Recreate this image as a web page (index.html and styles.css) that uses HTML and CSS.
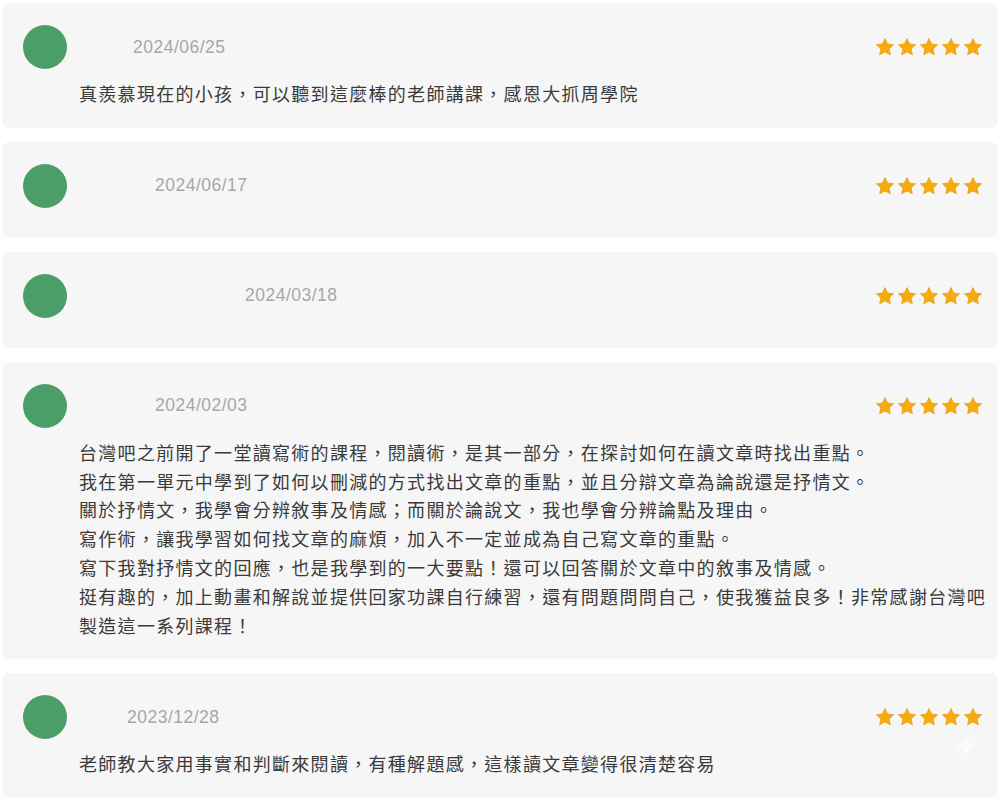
FILE: index.html
```html
<!DOCTYPE html>
<html lang="zh-Hant">
<head>
    <meta charset="UTF-8">
    <meta name="viewport" content="width=device-width, initial-scale=1.0">
    <title>課程評價</title>
    <link rel="stylesheet" href="styles.css">
</head>
<body>
    <svg width="0" height="0" class="defs">
        <symbol id="star" viewBox="0 0 24 24">
            <path d="M12 1.8l3.1 6.6 7.2.9-5.3 5 1.4 7.1L12 17.9l-6.4 3.5 1.4-7.1-5.3-5 7.2-.9z"/>
        </symbol>
    </svg>
    <div class="reviews">
        <div class="review">
            <div class="review-head">
                <span class="avatar"></span>
                <span class="name name-1"></span>
                <span class="date">2024/06/25</span>
                <span class="stars">
                    <svg><use href="#star"/></svg><svg><use href="#star"/></svg><svg><use href="#star"/></svg><svg><use href="#star"/></svg><svg><use href="#star"/></svg>
                </span>
            </div>
            <p class="review-text">真羨慕現在的小孩，可以聽到這麼棒的老師講課，感恩大抓周學院</p>
        </div>
        <div class="review">
            <div class="review-head">
                <span class="avatar"></span>
                <span class="name name-2"></span>
                <span class="date">2024/06/17</span>
                <span class="stars">
                    <svg><use href="#star"/></svg><svg><use href="#star"/></svg><svg><use href="#star"/></svg><svg><use href="#star"/></svg><svg><use href="#star"/></svg>
                </span>
            </div>
        </div>
        <div class="review">
            <div class="review-head">
                <span class="avatar"></span>
                <span class="name name-3"></span>
                <span class="date">2024/03/18</span>
                <span class="stars">
                    <svg><use href="#star"/></svg><svg><use href="#star"/></svg><svg><use href="#star"/></svg><svg><use href="#star"/></svg><svg><use href="#star"/></svg>
                </span>
            </div>
        </div>
        <div class="review">
            <div class="review-head">
                <span class="avatar"></span>
                <span class="name name-2"></span>
                <span class="date">2024/02/03</span>
                <span class="stars">
                    <svg><use href="#star"/></svg><svg><use href="#star"/></svg><svg><use href="#star"/></svg><svg><use href="#star"/></svg><svg><use href="#star"/></svg>
                </span>
            </div>
            <p class="review-text">台灣吧之前開了一堂讀寫術的課程，閱讀術，是其一部分，在探討如何在讀文章時找出重點。<br>我在第一單元中學到了如何以刪減的方式找出文章的重點，並且分辯文章為論說還是抒情文。<br>關於抒情文，我學會分辨敘事及情感；而關於論說文，我也學會分辨論點及理由。<br>寫作術，讓我學習如何找文章的麻煩，加入不一定並成為自己寫文章的重點。<br>寫下我對抒情文的回應，也是我學到的一大要點！還可以回答關於文章中的敘事及情感。<br>挺有趣的，加上動畫和解說並提供回家功課自行練習，還有問題問問自己，使我獲益良多！非常感謝台灣吧製造這一系列課程！</p>
        </div>
        <div class="review">
            <div class="review-head">
                <span class="avatar"></span>
                <span class="name name-4"></span>
                <span class="date">2023/12/28</span>
                <span class="stars">
                    <svg><use href="#star"/></svg><svg><use href="#star"/></svg><svg><use href="#star"/></svg><svg><use href="#star"/></svg><svg><use href="#star"/></svg>
                </span>
            </div>
            <p class="review-text">老師教大家用事實和判斷來閱讀，有種解題感，這樣讀文章變得很清楚容易</p>
        </div>
    </div>
    <svg class="sparkle" viewBox="0 0 24 24">
        <path d="M12 0C12.8 6.5 17.5 11.2 24 12 17.5 12.8 12.8 17.5 12 24 11.2 17.5 6.5 12.8 0 12 6.5 11.2 11.2 6.5 12 0z"/>
    </svg>
</body>
</html>
```

FILE: styles.css
```css
html, body{
    margin: 0;
    background: #ffffff;
}
body{
    font-family: "Noto Sans CJK TC", "Noto Sans", sans-serif;
    overflow: hidden;
}
.defs{
    position: absolute;
}
.reviews{
    display: flex;
    flex-direction: column;
    gap: 14px;
    padding: 3px 2px;
}
.review{
    background: #f6f6f6;
    border-radius: 7px;
    padding: 22px 8px 20px 21px;
}
.review-head{
    display: flex;
    align-items: center;
    height: 44px;
}
.review-head:only-child{
    margin-bottom: 10px;
}
.avatar{
    flex: none;
    width: 44px;
    height: 44px;
    border-radius: 50%;
    background: #4c9e68;
}
.name{
    flex: none;
}
.name-1{ width: 66px; }
.name-2{ width: 88px; }
.name-3{ width: 178px; }
.name-4{ width: 60px; }
.date{
    font-family: "Liberation Sans", Arial, sans-serif;
    font-size: 17.5px;
    letter-spacing: 0.5px;
    color: #a7a7a7;
}
.stars{
    margin-left: auto;
    margin-right: 7px;
    display: flex;
    gap: 2px;
}
.stars svg{
    width: 20px;
    height: 20px;
    fill: #f5aa10;
    stroke: #e99c00;
    stroke-width: 0.8;
}
.review-text{
    margin: 10px 0 0;
    padding-left: 56px;
    font-size: 18px;
    line-height: 28.8px;
    letter-spacing: 1.3px;
    color: #3a3a3a;
}
.sparkle{
    position: absolute;
    left: 954px;
    top: 732px;
    width: 24px;
    height: 28px;
    fill: #ffffff;
    opacity: 0.7;
}
```
